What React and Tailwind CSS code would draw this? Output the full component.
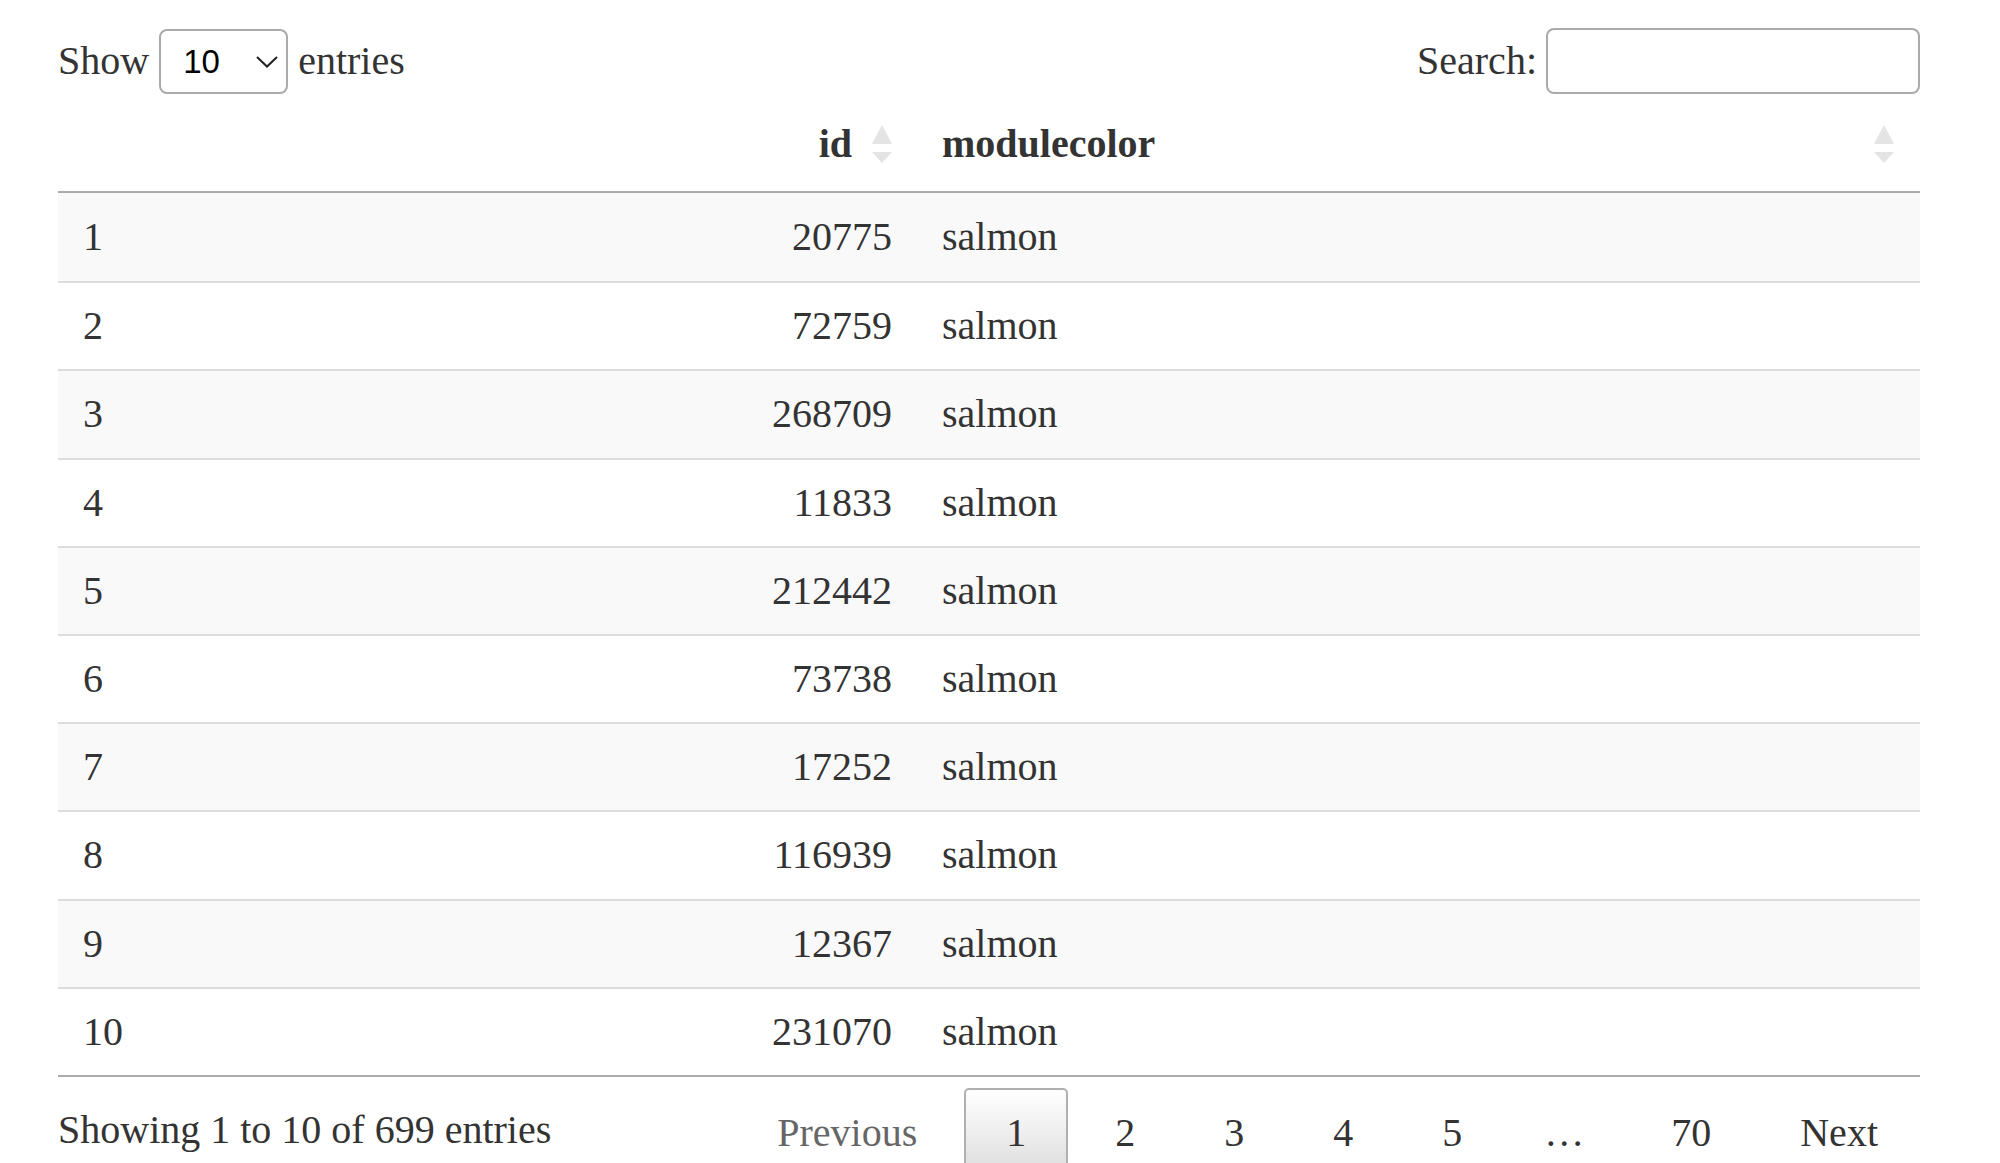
import React from 'react';

const rows = [
  { n: 1, id: 20775, color: 'salmon' },
  { n: 2, id: 72759, color: 'salmon' },
  { n: 3, id: 268709, color: 'salmon' },
  { n: 4, id: 11833, color: 'salmon' },
  { n: 5, id: 212442, color: 'salmon' },
  { n: 6, id: 73738, color: 'salmon' },
  { n: 7, id: 17252, color: 'salmon' },
  { n: 8, id: 116939, color: 'salmon' },
  { n: 9, id: 12367, color: 'salmon' },
  { n: 10, id: 231070, color: 'salmon' },
];

const SortIcon = () => (
  <div className="flex flex-col items-center gap-[8px]">
    <svg width="20" height="19" viewBox="0 0 20 19">
      <polygon points="0,19 10,0 20,19" fill="#e4e4e4" />
    </svg>
    <svg width="20" height="11" viewBox="0 0 20 11">
      <polygon points="0,0 20,0 10,11" fill="#e4e4e4" />
    </svg>
  </div>
);

const PageButton = ({ children, current, disabled }) => (
  <div
    className={`ml-[5px] px-[40px] py-[20px] border-2 rounded-[5px] ${
      current
        ? 'border-[#b0b0b0] bg-linear-to-b from-white to-[#dcdcdc] text-[#333]'
        : 'border-transparent'
    } ${disabled ? 'text-[#666]' : 'text-[#333]'}`}
  >
    {children}
  </div>
);

export default function App() {
  return (
    <div
      className="w-[2000px] h-[1163px] overflow-hidden bg-white text-[#333] text-[40px] leading-[46px]"
      style={{ fontFamily: '"Liberation Serif", "Times New Roman", serif' }}
    >
      <div className="ml-[58px] w-[1862px]">
        {/* length + filter controls */}
        <div className="mt-[28px] h-[66px] flex items-center justify-between">
          <div className="flex items-center">
            <span>Show</span>
            <div className="ml-[10px] w-[129px] h-[65px] border-2 border-[#aaa] rounded-[8px] bg-white flex items-center justify-between pl-[22px] pr-[8px]">
              <span
                className="text-[33px] text-black leading-none"
                style={{ fontFamily: '"Liberation Sans", Arial, sans-serif' }}
              >
                10
              </span>
              <svg width="22" height="12" viewBox="0 0 22 12" className="mt-[2px]">
                <polyline points="1,1 11,10.5 21,1" fill="none" stroke="#222" strokeWidth="2" />
              </svg>
            </div>
            <span className="ml-[10px]">entries</span>
          </div>
          <div className="flex items-center">
            <span>Search:</span>
            <input
              type="text"
              className="ml-[9px] w-[374px] h-[66px] border-2 border-[#aaa] rounded-[8px] bg-white outline-none"
            />
          </div>
        </div>

        {/* table */}
        <div className="grid grid-cols-[559px_300px_1fr] h-[99px] border-b-2 border-[#ababab] font-bold">
          <div />
          <div className="flex items-center justify-end gap-[20px] pr-[25px] pt-[2px]">
            <span>id</span>
            <SortIcon />
          </div>
          <div className="flex items-center justify-between pl-[25px] pr-[26px] pt-[2px]">
            <span>modulecolor</span>
            <SortIcon />
          </div>
        </div>

        <div className="border-b-2 border-[#ababab]">
          {rows.map((r, i) => (
            <div
              key={r.n}
              className={`grid grid-cols-[559px_300px_1fr] h-[88.2px] items-center ${
                i > 0 ? 'border-t-2 border-[#ddd]' : ''
              } ${i % 2 === 0 ? 'bg-[#f9f9f9]' : 'bg-white'}`}
            >
              <div className="pl-[25px]">{r.n}</div>
              <div className="pr-[25px] text-right">{r.id}</div>
              <div className="pl-[25px]">{r.color}</div>
            </div>
          ))}
        </div>

        {/* info + pagination */}
        <div className="flex justify-between">
          <div className="pt-[30px]">Showing 1 to 10 of 699 entries</div>
          <div className="pt-[11px] flex items-start">
            <PageButton disabled>Previous</PageButton>
            <PageButton current>1</PageButton>
            <PageButton>2</PageButton>
            <PageButton>3</PageButton>
            <PageButton>4</PageButton>
            <PageButton>5</PageButton>
            <span className="px-[40px] pt-[22px]">…</span>
            <PageButton>70</PageButton>
            <PageButton>Next</PageButton>
          </div>
        </div>
      </div>
    </div>
  );
}
